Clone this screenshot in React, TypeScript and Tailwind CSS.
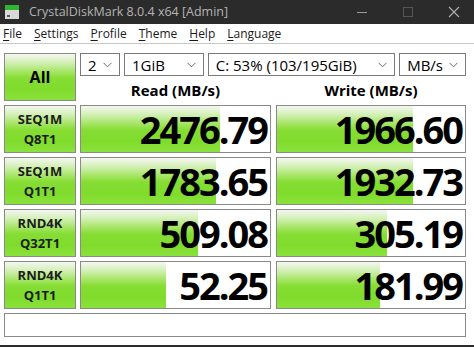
import React from "react";

const GREEN =
  "bg-[linear-gradient(to_bottom,#f4f7f2_0%,#d4f0b8_18%,#a6e566_38%,#86dd34_52%,#80dc2c_78%,#8ae23c_100%)]";

function Chevron() {
  return (
    <svg width="9" height="6" viewBox="0 0 9 6" className="shrink-0">
      <path d="M0.5 0.8 L4.5 4.8 L8.5 0.8" fill="none" stroke="#6b6b6b" strokeWidth="1" />
    </svg>
  );
}

function Combo({ w, text }: { w: string; text: string }) {
  return (
    <div className={`${w} h-[23px] border border-[#7a7a7a] bg-white flex items-center justify-between pl-[7px] pr-[7px]`}>
      <span className="text-[15px] leading-[20px] text-black">{text}</span>
      <Chevron />
    </div>
  );
}

function Label({ a, b }: { a: string; b: string }) {
  return (
    <div className={`h-[48px] border border-[#8a8a8a] ${GREEN} flex flex-col items-center justify-center text-[13px] font-bold text-[#1c1c1c] leading-[20px]`}>
      <span>{a}</span>
      <span>{b}</span>
    </div>
  );
}

function Value({ v, fill }: { v: string; fill: number }) {
  return (
    <div className="relative h-[48px] border border-[#8a8a8a] bg-white">
      <div className={`absolute left-0 top-0 bottom-0 ${GREEN}`} style={{ width: fill }} />
      <div className="relative h-full flex items-center justify-end pr-[3px] text-[38px] font-bold tracking-[-2px] text-black leading-[46px]">
        {v}
      </div>
    </div>
  );
}

const rows = [
  { a: "SEQ1M", b: "Q8T1", r: "2476.79", rf: 139, w: "1966.60", wf: 136 },
  { a: "SEQ1M", b: "Q1T1", r: "1783.65", rf: 135, w: "1932.73", wf: 136 },
  { a: "RND4K", b: "Q32T1", r: "509.08", rf: 117, w: "305.19", wf: 110 },
  { a: "RND4K", b: "Q1T1", r: "52.25", rf: 85, w: "181.99", wf: 103 },
];

function MenuItem({ t }: { t: string }) {
  return (
    <span>
      <span className="underline underline-offset-2">{t[0]}</span>
      {t.slice(1)}
    </span>
  );
}

export default function App() {
  return (
    <div className="w-[474px] h-[347px] bg-white overflow-hidden flex flex-col font-['Open_Sans',sans-serif]">
      {/* title bar */}
      <div className="h-[24px] bg-[#2b2b2b] flex items-center shrink-0">
        <svg width="16" height="16" viewBox="0 0 16 16" className="ml-[4px]">
          <rect x="1" y="1" width="14" height="5" fill="#2fb52f" />
          <rect x="1" y="6" width="14" height="9" fill="#d9d9d9" />
          <rect x="3" y="11" width="3" height="2" fill="#5a5a5a" />
        </svg>
        <span className="ml-[9px] text-[12.5px] text-[#b4b4b4]">CrystalDiskMark 8.0.4 x64 [Admin]</span>
        <div className="ml-auto flex items-center">
          <svg width="12" height="12" viewBox="0 0 12 12" className="mr-[34px]">
            <path d="M1 6.5 H11" stroke="#9a9a9a" strokeWidth="1" />
          </svg>
          <svg width="12" height="12" viewBox="0 0 12 12" className="mr-[34px]">
            <rect x="1.5" y="1.5" width="9" height="9" fill="none" stroke="#555" strokeWidth="1" />
          </svg>
          <svg width="12" height="12" viewBox="0 0 12 12" className="mr-[14px]">
            <path d="M1 1 L11 11 M11 1 L1 11" stroke="#b0b0b0" strokeWidth="1.1" />
          </svg>
        </div>
      </div>
      {/* menu */}
      <div className="h-[20px] border-b border-[#c8c8c8] flex items-center gap-[12px] pl-[3px] text-[12px] text-[#1a1a1a] shrink-0">
        <MenuItem t="File" />
        <MenuItem t="Settings" />
        <MenuItem t="Profile" />
        <MenuItem t="Theme" />
        <MenuItem t="Help" />
        <MenuItem t="Language" />
      </div>
      {/* main */}
      <div className="pl-[4px] pt-[9px] w-[467px] grid grid-cols-[72px_191px_191px] gap-x-[4px]">
        <div className={`row-span-2 h-[48px] border border-[#8a8a8a] ${GREEN} flex items-center justify-center text-[16px] font-bold text-black`}>
          All
        </div>
        <div className="col-span-2 flex gap-[4px]">
          <Combo w="w-[40px]" text="2" />
          <Combo w="w-[80px]" text="1GiB" />
          <Combo w="w-[188px]" text="C: 53% (103/195GiB)" />
          <Combo w="w-[67px]" text="MB/s" />
        </div>
        <div className="h-[25px] flex items-end justify-center text-[15px] leading-[21px] font-bold text-black">Read (MB/s)</div>
        <div className="h-[25px] flex items-end justify-center text-[15px] leading-[21px] font-bold text-black ml-[1px]">Write (MB/s)</div>
        <div className="col-span-3 flex flex-col gap-[4px] mt-[4px]">
          {rows.map((r, i) => (
            <div key={i} className="grid grid-cols-[72px_191px_191px] gap-x-[4px]">
              <Label a={r.a} b={r.b} />
              <Value v={r.r} fill={r.rf} />
              <div className="ml-[1px]">
                <Value v={r.w} fill={r.wf} />
              </div>
            </div>
          ))}
          <div className="h-[24px] border border-[#8a8a8a] bg-white" />
        </div>
      </div>
      <div className="mt-auto h-[2px] bg-[#2b2b2b]" />
    </div>
  );
}
